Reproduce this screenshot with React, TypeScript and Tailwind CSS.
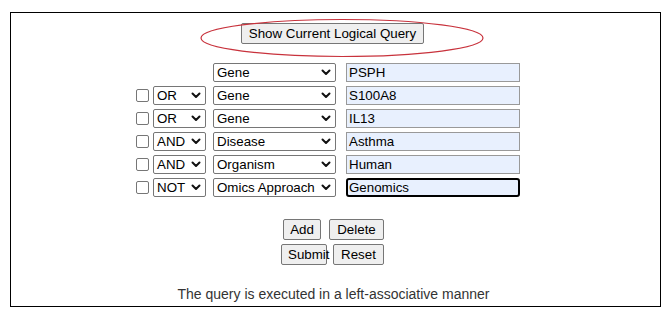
import React from 'react'

const font = { fontFamily: '"Liberation Sans", Arial, sans-serif' }

const Chevron = () => (
  <svg width="10" height="7" viewBox="0 0 10 7" className="shrink-0">
    <polyline points="1.5,1.5 5,5 8.5,1.5" fill="none" stroke="#111" strokeWidth="2" strokeLinecap="round" strokeLinejoin="round" />
  </svg>
)

const FakeSelect = ({ label, width }: { label: string; width: string }) => (
  <div className={`${width} h-[19px] flex items-center justify-between pl-[3px] pr-[4px] border border-[#767676] rounded-[2px] bg-white text-[13.33px] text-black leading-none`}>
    <span>{label}</span>
    <Chevron />
  </div>
)

const Btn = ({ children, className = '' }: { children: React.ReactNode; className?: string }) => (
  <button className={`h-[21px] px-[6px] border border-[#767676] rounded-[2px] bg-[#efefef] text-[13.33px] text-black leading-none ${className}`}>
    {children}
  </button>
)

const rows = [
  { op: null, field: 'Gene', value: 'PSPH' },
  { op: 'OR', field: 'Gene', value: 'S100A8' },
  { op: 'OR', field: 'Gene', value: 'IL13' },
  { op: 'AND', field: 'Disease', value: 'Asthma' },
  { op: 'AND', field: 'Organism', value: 'Human' },
  { op: 'NOT', field: 'Omics Approach', value: 'Genomics', focused: true },
]

export default function App() {
  return (
    <div className="w-[671px] h-[316px] bg-white pt-[12px] pl-[10px]" style={font}>
      <div className="w-[651px] h-[295px] border border-black flex flex-col">
        {/* top button with red ellipse */}
        <div className="relative mt-[10px] flex justify-center pr-[6px]">
          <Btn className="w-[183px] h-[21px]">Show Current Logical Query</Btn>
          <svg className="absolute left-[188px] top-[-6px] pointer-events-none" width="288" height="42" viewBox="0 0 288 42">
            <ellipse cx="143" cy="21" rx="141" ry="18.5" fill="none" stroke="#c8323c" strokeWidth="1.2" />
          </svg>
        </div>

        {/* query rows */}
        <div className="mt-[19px] ml-[125px] flex flex-col gap-[4px]">
          {rows.map((r, i) => (
            <div key={i} className="flex items-center h-[19px]">
              <div className="w-[13px] h-[13px] mr-[4px]">
                {r.op && <div className="w-[13px] h-[13px] border border-[#767676] rounded-[2px] bg-white" />}
              </div>
              <div className="w-[53px] mr-[7px]">
                {r.op && <FakeSelect label={r.op} width="w-[53px]" />}
              </div>
              <FakeSelect label={r.field} width="w-[123px]" />
              <div
                className={`ml-[10px] w-[174px] h-[19px] flex items-center bg-[#e8f0fe] text-[13.33px] text-black leading-none ${
                  r.focused ? 'border-2 border-black rounded-[3px] pl-[1px]' : 'border border-[#999] pl-[2px]'
                }`}
              >
                {r.value}
              </div>
            </div>
          ))}
        </div>

        {/* action buttons */}
        <div className="mt-[22px] flex flex-col items-center gap-[4px] pr-[4px]">
          <div className="flex gap-[8px]">
            <Btn className="w-[38px]">Add</Btn>
            <Btn className="w-[55px]">Delete</Btn>
          </div>
          <div className="flex gap-[6px] pr-[2px]">
            <Btn className="w-[46px] px-0">Submit</Btn>
            <Btn className="w-[51px]">Reset</Btn>
          </div>
        </div>

        <p className="mt-[19px] text-center text-[14px] text-[#333] pr-[4px]">
          The query is executed in a left-associative manner
        </p>
      </div>
    </div>
  )
}
